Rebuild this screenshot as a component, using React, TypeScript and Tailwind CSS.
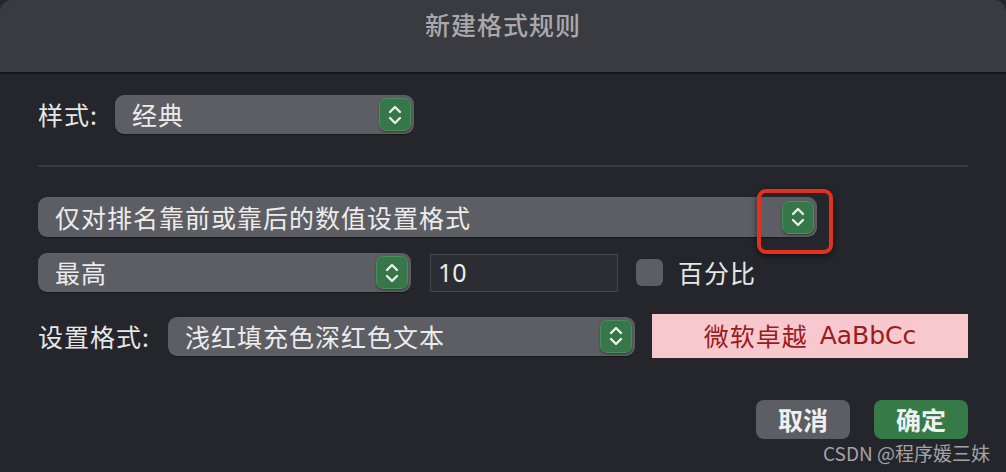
import React from "react";

const font = { fontFamily: '"Noto Sans CJK SC", "Noto Sans", sans-serif' };

function Stepper() {
  return (
    <div className="flex h-[33px] w-[32px] shrink-0 items-center justify-center rounded-[7px] border border-[#4d8d5c] bg-[#367749] shadow-[0_1px_2px_rgba(0,0,0,0.4)]">
      <svg width="16" height="22" viewBox="0 0 16 22" fill="none" stroke="#e8efe9" strokeWidth="2.4" strokeLinecap="round" strokeLinejoin="round">
        <polyline points="3,8 8,3 13,8" />
        <polyline points="3,14 8,19 13,14" />
      </svg>
    </div>
  );
}

function Select({ label, className }: { label: string; className: string }) {
  return (
    <div className={`flex items-center justify-between rounded-[9px] bg-[#5d5e63] pl-[17px] pr-[3px] shadow-[0_1px_1px_rgba(0,0,0,0.35)] ${className}`}>
      <span className="text-[25px] leading-none tracking-[1px] text-[#ececec]">{label}</span>
      <Stepper />
    </div>
  );
}

export default function App() {
  return (
    <div className="relative h-[472px] w-[1006px] overflow-hidden bg-[#24262b]" style={font}>
      {/* title bar */}
      <div className="flex h-[74px] items-start justify-center rounded-t-[12px] border-b-2 border-[#141518] bg-[#3a3b40] pt-[6px]">
        <span className="text-[25px] font-medium tracking-[1px] text-[#a9a9ac]">新建格式规则</span>
      </div>

      <div className="flex flex-col px-[38px] pt-[21px]">
        {/* style row */}
        <div className="flex items-center gap-[15px]">
          <span className="w-[62px] text-[25px] leading-none tracking-[1px] text-[#e6e6e6]">样式:</span>
          <Select label="经典" className="h-[39px] w-[299px]" />
        </div>

        <div className="mt-[31px] h-[2px] bg-[#393b40]" />

        {/* rule type */}
        <Select label="仅对排名靠前或靠后的数值设置格式" className="mt-[30px] h-[40px] w-[779px]" />

        {/* top / value / percent */}
        <div className="mt-[16px] flex items-center">
          <Select label="最高" className="h-[39px] w-[373px]" />
          <div className="ml-[19px] flex h-[38px] w-[188px] items-center border border-[#45474c] bg-[#2b2d32] pl-[7px]">
            <span className="text-[25px] leading-none text-[#ececec]" style={{ fontFamily: '"Noto Sans", sans-serif' }}>10</span>
          </div>
          <div className="ml-[18px] h-[27px] w-[27px] rounded-[6px] bg-[#5d5e63]" />
          <span className="ml-[15px] text-[25px] leading-none tracking-[1px] text-[#e6e6e6]">百分比</span>
        </div>

        {/* format row */}
        <div className="mt-[22px] flex items-center">
          <span className="w-[130px] text-[25px] leading-none tracking-[1px] text-[#e6e6e6]">设置格式:</span>
          <Select label="浅红填充色深红色文本" className="h-[39px] w-[467px]" />
          <div className="ml-[17px] flex h-[44px] w-[316px] items-center justify-center bg-[#f7c9cf] text-[25px] text-[#9b1c1c]">
            <span className="tracking-[1px]">微软卓越</span>
            <span className="ml-[12px]" style={{ fontFamily: '"DejaVu Sans", sans-serif' }}>AaBbCc</span>
          </div>
        </div>

        {/* buttons */}
        <div className="mt-[42px] flex justify-end gap-[24px]">
          <button className="h-[39px] w-[94px] rounded-[8px] bg-[#5d5e63] text-[25px] font-bold text-[#f0f0f0]">取消</button>
          <button className="h-[39px] w-[94px] rounded-[8px] bg-[#357a47] text-[25px] font-bold text-[#f0f0f0]">确定</button>
        </div>
      </div>

      {/* annotation highlight */}
      <div className="absolute left-[757px] top-[189px] h-[65px] w-[76px] rounded-[9px] border-[4px] border-[#e3311f] shadow-[0_2px_6px_rgba(0,0,0,0.6)]" />

      {/* watermark */}
      <span className="absolute right-[16px] top-[439px] text-[19px] text-[#a3a3a5]">CSDN @程序媛三妹</span>
    </div>
  );
}
